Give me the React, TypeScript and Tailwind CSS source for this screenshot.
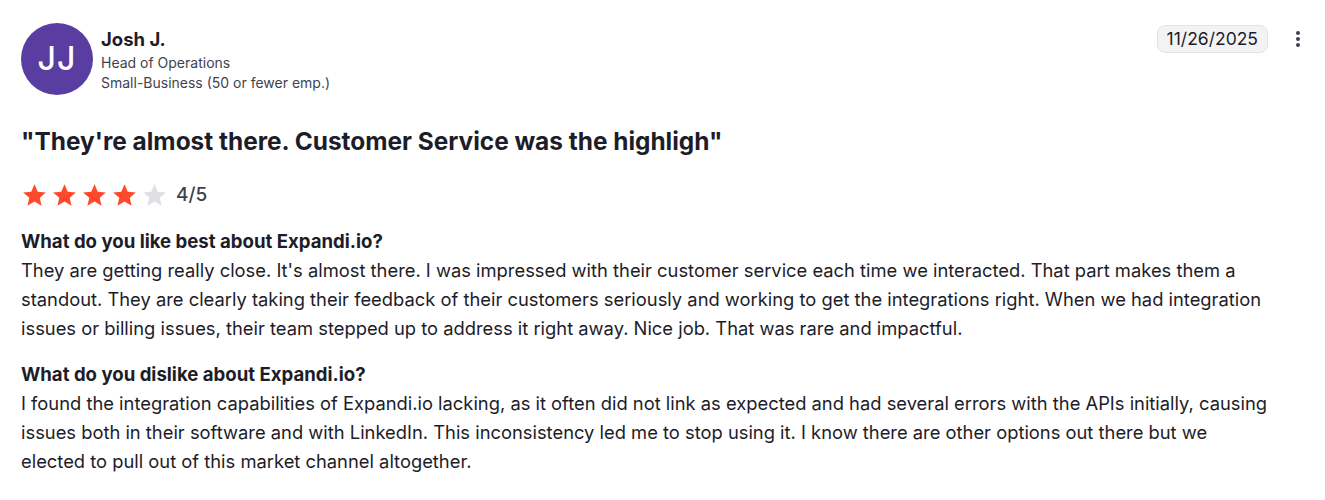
import { useState } from "react";

const font = { fontFamily: "Inter, 'Noto Sans', sans-serif" };

function Star({ filled }: { filled: boolean }) {
  return (
    <svg width="25" height="25" viewBox="0 0 24 24" className={filled ? "text-[#ff492c]" : "text-[#dfe0e3]"}>
      <path
        fill="currentColor"
        d="M12 1.2l3.1 7.2 7.8.6-5.9 5.2 1.8 7.6L12 17.8l-6.8 4 1.8-7.6L1.1 9l7.8-.6z"
      />
    </svg>
  );
}

function Section({ question, lines }: { question: string; lines: string[] }) {
  return (
    <div>
      <h3 className="text-[18.6px] leading-[29px] font-bold text-[#1d1d29]">{question}</h3>
      <p className="text-[18.35px] leading-[29px] text-[#1d1d29]">
        {lines.map((line, i) => (
          <span key={i}>
            {line}
            {i < lines.length - 1 && <br />}
          </span>
        ))}
      </p>
    </div>
  );
}

export default function App() {
  const [rating] = useState(4);

  return (
    <div className="bg-white w-[1325px] h-[500px] px-[21px] pt-[23px]" style={font}>
      <div className="flex items-start justify-between">
        <div className="flex items-start gap-[8px]">
          <div className="w-[72px] h-[72px] rounded-full bg-[#5a3da0] flex items-center justify-center text-white text-[32px] font-medium tracking-[1px]">
            JJ
          </div>
          <div className="pt-[3px]">
            <div className="text-[18.5px] leading-[26px] font-bold text-[#1d1d29]">Josh J.</div>
            <div className="mt-[1px] text-[14px] leading-[20px] text-[#3f4350]">Head of Operations</div>
            <div className="text-[14px] leading-[20px] text-[#3f4350]">Small-Business (50 or fewer emp.)</div>
          </div>
        </div>
        <div className="flex items-center gap-[27px] pt-[2px] pr-[3px]">
          <span className="px-[9px] h-[28px] flex items-center rounded-lg bg-[#f3f3f4] border border-[#e2e3e6] text-[17.5px] text-[#1d1d29]">
            11/26/2025
          </span>
          <div className="flex flex-col gap-[2px] w-[6px] items-center">
            <span className="w-[4px] h-[4px] rounded-full bg-[#3f4350]" />
            <span className="w-[4px] h-[4px] rounded-full bg-[#3f4350]" />
            <span className="w-[4px] h-[4px] rounded-full bg-[#3f4350]" />
          </div>
        </div>
      </div>

      <h2 className="mt-[30px] text-[24.4px] leading-[32px] font-bold text-[#1d1d29]">
        "They're almost there. Customer Service was the highligh"
      </h2>

      <div className="mt-[24px] flex items-center">
        <div className="flex gap-[5px] pl-[1px]">
          {[1, 2, 3, 4, 5].map((n) => (
            <Star key={n} filled={n <= rating} />
          ))}
        </div>
        <span className="ml-[9px] text-[19px] font-medium text-[#3f4350]">{rating}/5</span>
      </div>

      <div className="mt-[17px] flex flex-col gap-[17px]">
        <Section
          question="What do you like best about Expandi.io?"
          lines={[
            "They are getting really close. It's almost there. I was impressed with their customer service each time we interacted. That part makes them a",
            "standout. They are clearly taking their feedback of their customers seriously and working to get the integrations right. When we had integration",
            "issues or billing issues, their team stepped up to address it right away. Nice job. That was rare and impactful.",
          ]}
        />
        <Section
          question="What do you dislike about Expandi.io?"
          lines={[
            "I found the integration capabilities of Expandi.io lacking, as it often did not link as expected and had several errors with the APIs initially, causing",
            "issues both in their software and with LinkedIn. This inconsistency led me to stop using it. I know there are other options out there but we",
            "elected to pull out of this market channel altogether.",
          ]}
        />
      </div>
    </div>
  );
}
